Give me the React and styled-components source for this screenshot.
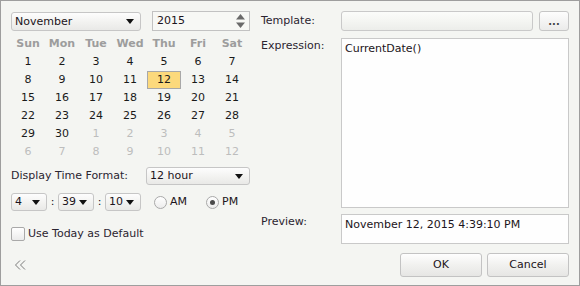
import React from "react";
import styled, { createGlobalStyle } from "styled-components";

const GlobalStyle = createGlobalStyle`
  html, body { margin: 0; padding: 0; background: #ffffff; }
  * { box-sizing: border-box; }
`;

const WEEK_DAYS = ["Sun", "Mon", "Tue", "Wed", "Thu", "Fri", "Sat"];

// November 2015 starts on a Sunday
const buildDays = () => {
  const days = [];
  for (let d = 1; d <= 30; d++) days.push({ n: d, other: false });
  for (let d = 1; days.length < 42; d++) days.push({ n: d, other: true });
  return days;
};

const Arrow = () => (
  <svg width="8" height="5" viewBox="0 0 8 5">
    <path d="M0 0 H8 L4 5 Z" fill="#111" />
  </svg>
);

const Spinner = () => (
  <svg width="9" height="14" viewBox="0 0 9 14">
    <path d="M4.5 0 L9 5.5 H0 Z" fill="#6a6a6a" />
    <path d="M0 8.5 H9 L4.5 14 Z" fill="#6a6a6a" />
  </svg>
);

const Collapse = () => (
  <svg width="12" height="10" viewBox="0 0 12 10">
    <path d="M6 0.5 L1.5 5 L6 9.5 M11 0.5 L6.5 5 L11 9.5" fill="none" stroke="#7a7a7a" strokeWidth="1" />
  </svg>
);

const App = () => {
  const days = buildDays();
  return (
    <>
      <GlobalStyle />
      <Dialog>
        <LeftPane>
          <TopRow>
            <Select width={130} height={19}>
              <span>November</span>
              <Arrow />
            </Select>
            <YearBox>
              <span>2015</span>
              <Spinner />
            </YearBox>
          </TopRow>

          <Calendar>
            {WEEK_DAYS.map((d) => (
              <DayHead key={d}>{d}</DayHead>
            ))}
            {days.map((d, i) => (
              <DayCell key={i} $other={d.other} $selected={!d.other && d.n === 12}>
                {d.n}
              </DayCell>
            ))}
          </Calendar>

          <FormatRow>
            <span>Display Time Format:</span>
            <Select width={104} height={18}>
              <span>12 hour</span>
              <Arrow />
            </Select>
          </FormatRow>

          <TimeRow>
            <Select width={36} height={18}>
              <span>4</span>
              <Arrow />
            </Select>
            <Colon>:</Colon>
            <Select width={36} height={18}>
              <span>39</span>
              <Arrow />
            </Select>
            <Colon>:</Colon>
            <Select width={36} height={18}>
              <span>10</span>
              <Arrow />
            </Select>
            <RadioOption $first>
              <Radio />
              <span>AM</span>
            </RadioOption>
            <RadioOption>
              <Radio $checked />
              <span>PM</span>
            </RadioOption>
          </TimeRow>

          <CheckRow>
            <CheckBox />
            <span>Use Today as Default</span>
          </CheckRow>

          <CollapseButton>
            <Collapse />
          </CollapseButton>
        </LeftPane>

        <RightPane>
          <FieldRow>
            <Label $pad={3}>Template:</Label>
            <TemplateInput />
            <DotsButton>...</DotsButton>
          </FieldRow>
          <FieldRow $gap={7}>
            <Label $pad={1}>Expression:</Label>
            <TextBox $height={170}>CurrentDate()</TextBox>
          </FieldRow>
          <FieldRow $gap={6}>
            <Label $pad={1}>Preview:</Label>
            <TextBox $height={30}>November 12, 2015 4:39:10 PM</TextBox>
          </FieldRow>
          <ButtonRow>
            <Button>OK</Button>
            <Button>Cancel</Button>
          </ButtonRow>
        </RightPane>
      </Dialog>
    </>
  );
};

const Dialog = styled.div`
  width: 580px;
  height: 286px;
  border: 1px solid #9e9e9e;
  background: #f4f5f2;
  display: flex;
  gap: 11px;
  padding: 10px;
  font-family: "DejaVu Sans", Verdana, sans-serif;
  font-size: 11px;
  line-height: 14px;
  color: #2b2430;
`;

const LeftPane = styled.div`
  width: 239px;
  display: flex;
  flex-direction: column;
`;

const TopRow = styled.div`
  display: flex;
  gap: 11px;
  align-items: flex-start;
`;

const Select = styled.div`
  width: ${(p) => p.width}px;
  height: ${(p) => p.height}px;
  margin-top: ${(p) => (p.height === 19 ? 1 : 0)}px;
  border: 1px solid #c6c6c6;
  border-radius: 3px;
  background: linear-gradient(#fdfdfd, #f2f2f0 55%, #e9e9e7);
  display: flex;
  align-items: center;
  justify-content: space-between;
  padding: 0 6px 0 3px;
  color: #1c1420;
  flex-shrink: 0;
  svg {
    flex-shrink: 0;
  }
`;

const YearBox = styled.div`
  width: 98px;
  height: 20px;
  border: 1px solid #c2c2c2;
  background: #f7f8f5;
  display: flex;
  align-items: center;
  justify-content: space-between;
  padding: 0 4px 0 4px;
  color: #1c1420;
`;

const Calendar = styled.div`
  margin-top: 4px;
  display: grid;
  grid-template-columns: repeat(7, 34px);
  grid-auto-rows: 18px;
`;

const DayHead = styled.div`
  display: flex;
  align-items: center;
  justify-content: center;
  font-weight: bold;
  color: #9d9d9d;
`;

const DayCell = styled.div`
  display: flex;
  align-items: center;
  justify-content: center;
  color: ${(p) => (p.$other ? "#bdbdbd" : "#1a1a1a")};
  background: ${(p) => (p.$selected ? "#fcd97c" : "transparent")};
  border: 1px solid ${(p) => (p.$selected ? "#a8a8a8" : "transparent")};
`;

const FormatRow = styled.div`
  margin-top: 6px;
  display: flex;
  align-items: center;
  justify-content: space-between;
`;

const TimeRow = styled.div`
  margin-top: 8px;
  display: flex;
  align-items: center;
`;

const Colon = styled.span`
  width: 11px;
  text-align: center;
  color: #1c1420;
`;

const RadioOption = styled.div`
  display: flex;
  align-items: center;
  gap: 3px;
  margin-left: ${(p) => (p.$first ? 13 : 19)}px;
  color: #1c1420;
`;

const Radio = styled.span`
  width: 13px;
  height: 13px;
  border-radius: 50%;
  border: 1px solid #a9a9a9;
  background: linear-gradient(#ffffff, #ececec);
  display: flex;
  align-items: center;
  justify-content: center;
  &::after {
    content: "";
    width: 5px;
    height: 5px;
    border-radius: 50%;
    background: ${(p) => (p.$checked ? "#4a4a4a" : "transparent")};
  }
`;

const CheckRow = styled.div`
  margin-top: 16px;
  display: flex;
  align-items: center;
  gap: 3px;
`;

const CheckBox = styled.span`
  width: 14px;
  height: 14px;
  border: 1px solid #a9a9a9;
  border-radius: 2px;
  background: linear-gradient(#ffffff, #ebebeb);
`;

const CollapseButton = styled.div`
  margin-top: 19px;
  margin-left: 3px;
  height: 10px;
  display: flex;
`;

const RightPane = styled.div`
  width: 308px;
  display: flex;
  flex-direction: column;
`;

const FieldRow = styled.div`
  display: flex;
  align-items: flex-start;
  margin-top: ${(p) => p.$gap || 0}px;
`;

const Label = styled.div`
  width: 80px;
  flex-shrink: 0;
  padding-top: ${(p) => p.$pad}px;
`;

const TemplateInput = styled.div`
  width: 192px;
  height: 20px;
  border: 1px solid #c9c9c9;
  border-radius: 3px;
  background: linear-gradient(#fbfcfa, #f5f6f3 45%, #ecedea);
`;

const DotsButton = styled.div`
  width: 30px;
  height: 20px;
  margin-left: 6px;
  border: 1px solid #c6c6c6;
  border-radius: 3px;
  background: linear-gradient(#fdfdfd, #ebebea);
  display: flex;
  align-items: flex-end;
  justify-content: center;
  padding-bottom: 3px;
  font-weight: bold;
  font-size: 10px;
  line-height: 10px;
  color: #444;
`;

const TextBox = styled.div`
  width: 228px;
  height: ${(p) => p.$height}px;
  border: 1px solid #c9c9c9;
  background: #fefefe;
  padding: 3px 3px;
  color: #1c1420;
`;

const ButtonRow = styled.div`
  margin-top: 9px;
  display: flex;
  justify-content: flex-end;
  gap: 5px;
`;

const Button = styled.div`
  width: 82px;
  height: 24px;
  border: 1px solid #c3c3c3;
  border-radius: 3px;
  background: linear-gradient(#fefefe, #f1f1ef 50%, #e6e6e4);
  display: flex;
  align-items: center;
  justify-content: center;
  color: #1c1420;
`;

export default App;
